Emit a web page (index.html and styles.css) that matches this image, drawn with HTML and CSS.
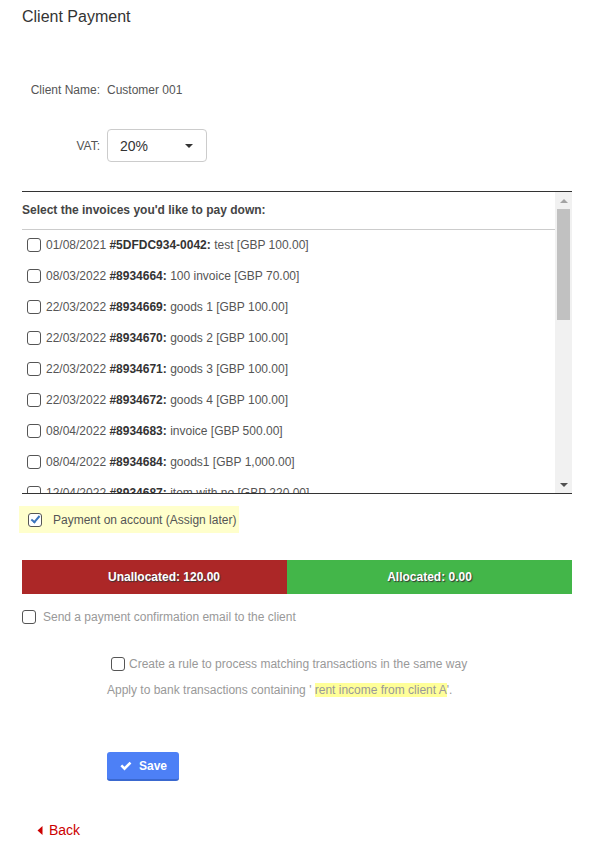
FILE: index.html
```html
<!DOCTYPE html>
<html lang="en">
<head>
    <meta charset="UTF-8">
    <meta name="viewport" content="width=device-width, initial-scale=1.0">
    <title>Client Payment</title>
    <link rel="stylesheet" href="styles.css">
</head>
<body>
    <div class="page">
        <h1>Client Payment</h1>

        <div class="field field-name">
            <span class="field-label">Client Name:</span>
            <span class="field-value">Customer 001</span>
        </div>

        <div class="field field-vat">
            <span class="field-label">VAT:</span>
            <div class="select">
                <span>20%</span>
                <span class="caret"></span>
            </div>
        </div>

        <div class="invoices">
            <div class="invoice-list">
                <div class="invoices-head">Select the invoices you'd like to pay down:</div>
                <label class="invoice"><input type="checkbox"><span>01/08/2021 <b>#5DFDC934-0042:</b> test [GBP 100.00]</span></label>
                <label class="invoice"><input type="checkbox"><span>08/03/2022 <b>#8934664:</b> 100 invoice [GBP 70.00]</span></label>
                <label class="invoice"><input type="checkbox"><span>22/03/2022 <b>#8934669:</b> goods 1 [GBP 100.00]</span></label>
                <label class="invoice"><input type="checkbox"><span>22/03/2022 <b>#8934670:</b> goods 2 [GBP 100.00]</span></label>
                <label class="invoice"><input type="checkbox"><span>22/03/2022 <b>#8934671:</b> goods 3 [GBP 100.00]</span></label>
                <label class="invoice"><input type="checkbox"><span>22/03/2022 <b>#8934672:</b> goods 4 [GBP 100.00]</span></label>
                <label class="invoice"><input type="checkbox"><span>08/04/2022 <b>#8934683:</b> invoice [GBP 500.00]</span></label>
                <label class="invoice"><input type="checkbox"><span>08/04/2022 <b>#8934684:</b> goods1 [GBP 1,000.00]</span></label>
                <label class="invoice"><input type="checkbox"><span>12/04/2022 <b>#8934687:</b> item with no [GBP 220.00]</span></label>
            </div>
            <div class="scrollbar">
                <div class="sb-btn"><span class="sb-up"></span></div>
                <div class="sb-thumb"></div>
                <div class="sb-btn sb-end"><span class="sb-down"></span></div>
            </div>
        </div>

        <label class="on-account"><input type="checkbox" checked><span>Payment on account (Assign later)</span></label>

        <div class="alloc">
            <div class="alloc-un">Unallocated: 120.00</div>
            <div class="alloc-done">Allocated: 0.00</div>
        </div>

        <label class="option"><input type="checkbox"><span>Send a payment confirmation email to the client</span></label>

        <div class="rule">
            <label class="option rule-check"><input type="checkbox"><span>Create a rule to process matching transactions in the same way</span></label>
            <p class="rule-note">Apply to bank transactions containing ' <span class="mark">rent income from client A</span>'.</p>

            <button class="save-btn">
                <svg width="12" height="10" viewBox="0 0 12 10"><path d="M0.4 5.3 L2.2 3.5 L4.5 5.8 L9.6 0.7 L11.4 2.5 L4.5 9.4 Z" fill="#ffffff"/></svg>
                <span>Save</span>
            </button>
        </div>

        <a class="back" href="#">
            <svg width="6" height="9" viewBox="0 0 6 9"><path d="M5.5 0 L5.5 9 L0.5 4.5 Z" fill="#cc0000"/></svg>
            <span>Back</span>
        </a>
    </div>
</body>
</html>
```

FILE: styles.css
```css
body {
    font-family: 'Liberation Sans', Arial, sans-serif;
    font-size: 12px;
    color: #555555;
    background-color: #ffffff;
    margin: 0;
    padding: 0;
}

.page {
    padding: 7px 36px 0 22px;
}

h1 {
    font-size: 16px;
    font-weight: normal;
    line-height: 20px;
    color: #333333;
    margin: 0;
}

.field {
    display: flex;
    align-items: center;
    margin-left: -22px;
}

.field-name {
    margin-top: 54px;
    line-height: 18px;
}

.field-vat {
    margin-top: 30px;
}

.field-label {
    width: 100px;
    padding-right: 7px;
    text-align: right;
    color: #555555;
}

.select {
    display: flex;
    align-items: center;
    justify-content: space-between;
    box-sizing: border-box;
    width: 100px;
    height: 33px;
    padding: 0 13px 0 12px;
    border: 1px solid #cccccc;
    border-radius: 4px;
    font-size: 14px;
    color: #333333;
}

.caret {
    width: 0;
    height: 0;
    border-left: 4px solid transparent;
    border-right: 4px solid transparent;
    border-top: 4px solid #333333;
}

/* invoice list with its scrollbar */
.invoices {
    display: flex;
    margin-top: 29px;
    height: 301px;
    border-top: 1px solid #333333;
    border-bottom: 1px solid #333333;
}

.invoice-list {
    flex: 1;
    overflow: hidden;
}

.invoices-head {
    font-weight: bold;
    line-height: 18px;
    padding: 9px 0 10px 0;
    border-bottom: 1px solid #cccccc;
    color: #444444;
}

.invoice {
    display: flex;
    align-items: center;
    gap: 5px;
    height: 28px;
    margin-top: 3px;
    padding-left: 5px;
    white-space: nowrap;
}

.invoice:first-of-type {
    margin-top: 1px;
}

.invoice b {
    color: #333333;
}

.scrollbar {
    display: flex;
    flex-direction: column;
    width: 17px;
    background-color: #f1f1f1;
}

.sb-btn {
    display: flex;
    align-items: center;
    justify-content: center;
    height: 17px;
}

.sb-end {
    margin-top: auto;
}

.sb-up {
    border-left: 4px solid transparent;
    border-right: 4px solid transparent;
    border-bottom: 4px solid #a3a3a3;
}

.sb-down {
    border-left: 4px solid transparent;
    border-right: 4px solid transparent;
    border-top: 4px solid #505050;
}

.sb-thumb {
    height: 111px;
    margin: 0 2px;
    background-color: #c1c1c1;
}

input[type="checkbox"] {
    appearance: none;
    -webkit-appearance: none;
    position: relative;
    flex-shrink: 0;
    width: 14px;
    height: 14px;
    margin: 0;
    border: 1px solid #555555;
    border-radius: 3px;
    background-color: #ffffff;
}

input[type="checkbox"]:checked::after {
    content: '';
    position: absolute;
    left: 4px;
    top: 0;
    width: 3px;
    height: 7px;
    border-right: 2.5px solid #3b74bd;
    border-bottom: 2.5px solid #3b74bd;
    transform: rotate(40deg);
}

.on-account {
    display: inline-flex;
    align-items: center;
    gap: 11px;
    height: 27px;
    margin: 12px 0 0 -3px;
    padding: 0 3px 0 9px;
    background-color: #ffffcc;
    color: #555555;
}

.alloc {
    display: flex;
    height: 34px;
    margin-top: 27px;
    font-weight: bold;
    color: #ffffff;
    text-shadow: 1px 1px 1px #333333;
}

.alloc-un {
    display: flex;
    align-items: center;
    justify-content: center;
    box-sizing: border-box;
    width: 265px;
    padding-left: 19px;
    background-color: #ac2727;
}

.alloc-done {
    flex: 1;
    display: flex;
    align-items: center;
    justify-content: center;
    background-color: #43b649;
}

.option {
    display: flex;
    align-items: center;
    gap: 7px;
    line-height: 18px;
    margin-top: 14px;
    color: #999999;
}

.rule {
    padding-left: 85px;
}

.rule-check {
    gap: 4px;
    margin: 29px 0 0 4px;
}

.rule-note {
    margin: 8px 0 0 0;
    line-height: 18px;
    color: #999999;
}

.mark {
    background-color: #ffff99;
}

.save-btn {
    display: flex;
    align-items: center;
    gap: 7px;
    width: 72px;
    height: 29px;
    margin-top: 53px;
    padding: 0 0 0 13px;
    border: none;
    border-bottom: 2px solid #3a68cf;
    border-radius: 3px;
    background-color: #4d80f6;
    color: #ffffff;
    font-family: 'Liberation Sans', Arial, sans-serif;
    font-size: 12px;
    font-weight: bold;
    cursor: pointer;
}

.back {
    display: flex;
    align-items: center;
    gap: 6px;
    margin-top: 40px;
    padding-left: 15px;
    line-height: 18px;
    font-size: 14px;
    color: #cc0000;
    text-decoration: none;
}
```
